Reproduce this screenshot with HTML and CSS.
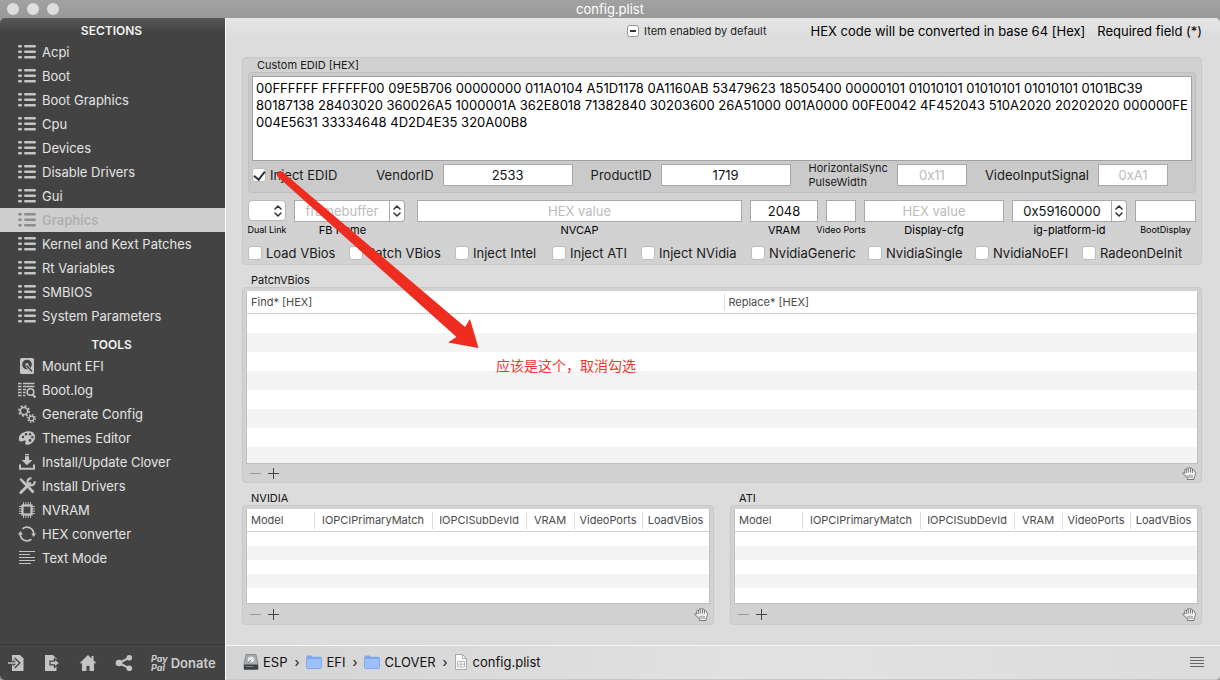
FILE: index.html
```html
<!DOCTYPE html>
<html lang="en">
<head>
<meta charset="utf-8">
<title>config.plist</title>
<link rel="stylesheet" href="styles.css">
</head>
<body>
<svg class="defs" aria-hidden="true">
  <symbol id="i-list" viewBox="0 0 18 14">
    <g fill="currentColor"><rect x="0" y="0" width="4" height="2.4" rx="1.2"/><rect x="0" y="5.5" width="4" height="2.4" rx="1.2"/><rect x="0" y="11" width="4" height="2.4" rx="1.2"/><rect x="6" y="0" width="12" height="2.4" rx="1.2"/><rect x="6" y="5.5" width="12" height="2.4" rx="1.2"/><rect x="6" y="11" width="12" height="2.4" rx="1.2"/></g>
  </symbol>
  <symbol id="i-updown" viewBox="0 0 8 12">
    <path d="M1 4 4 1 7 4M1 8l3 3 3-3" fill="none" stroke="#333" stroke-width="1.5" stroke-linecap="round" stroke-linejoin="round"/>
  </symbol>
  <symbol id="i-hand" viewBox="0 0 14 13">
    <path d="M4 9.200 1.200 7.200C.2 6.300 1 5.200 2 5.600l1 .5L2.600 3.400c-.1-1.200 1.400-1.500 1.800-.4l.3.800V1.900c0-1.200 1.900-1.200 1.900 0v-.5c0-1.200 1.900-1.200 1.900 0v.5c.1-1.100 1.900-1 1.900.2v1.300c.3-1 2-.8 2 .3l.9 1.500c.4.700.2 1.500 0 2.300-.3 1.600-1.400 2.600-1.400 5H5.500c0-1.300-.6-2.500-1.500-3.300z" fill="#f4f4f4" stroke="#666" stroke-width=".9"/>
    <path d="M4.700 3.500v2.500M6.600 2v3.500M8.500 2v3.500M10.400 3v3M6 8v3M8 7.500v3.500M10 8v3" stroke="#666" stroke-width=".8"/>
  </symbol>
  <symbol id="i-folder" viewBox="0 0 16 14">
    <path d="M.5 1.500q0-1 1-1h4l1.200 1.200H14.500q1 0 1 1V5H.5z" fill="#7ba7ee"/>
    <path d="M.5 3.500h15V12.500q0 1-1 1h-13q-1 0-1-1z" fill="#9dc0fa" stroke="#7fa9ec"/>
  </symbol>
</svg>
<header class="titlebar">
  <div class="lights"><i></i><i></i><i></i></div>
  <h1>config.plist</h1>
</header>
<div class="window">
  <aside class="sidebar">
    <nav>
      <h2>SECTIONS</h2>
      <ul>
        <li><a href="#"><svg class="list"><use href="#i-list"/></svg>Acpi</a></li>
        <li><a href="#"><svg class="list"><use href="#i-list"/></svg>Boot</a></li>
        <li><a href="#"><svg class="list"><use href="#i-list"/></svg>Boot Graphics</a></li>
        <li><a href="#"><svg class="list"><use href="#i-list"/></svg>Cpu</a></li>
        <li><a href="#"><svg class="list"><use href="#i-list"/></svg>Devices</a></li>
        <li><a href="#"><svg class="list"><use href="#i-list"/></svg>Disable Drivers</a></li>
        <li><a href="#"><svg class="list"><use href="#i-list"/></svg>Gui</a></li>
        <li><a href="#" class="current" aria-current="page"><svg class="list"><use href="#i-list"/></svg>Graphics</a></li>
        <li><a href="#"><svg class="list"><use href="#i-list"/></svg>Kernel and Kext Patches</a></li>
        <li><a href="#"><svg class="list"><use href="#i-list"/></svg>Rt Variables</a></li>
        <li><a href="#"><svg class="list"><use href="#i-list"/></svg>SMBIOS</a></li>
        <li><a href="#"><svg class="list"><use href="#i-list"/></svg>System Parameters</a></li>
      </ul>
      <h2 class="second">TOOLS</h2>
      <ul>
        <li><a href="#"><svg viewBox="0 0 18 18"><rect x="2" y="1" width="14" height="16" rx="1.500" fill="currentColor"/><circle cx="9" cy="7.500" r="4.800" fill="#434343"/><circle cx="9" cy="7.500" r="1.600" fill="currentColor"/><path d="m8.500 8.500 5 5.500" stroke="currentColor" stroke-width="3"/><path d="m9 9 4.500 5" stroke="#434343" stroke-width="1.500" stroke-linecap="round"/></svg>Mount EFI</a></li>
        <li><a href="#"><svg viewBox="0 0 18 18"><path d="M0 2.500h3.500M5 2.500h11.500M0 5.500h3.500M5 5.500h11.500M0 8.500h3.500M5 8.500h3M0 11.500h3.500M5 11.500h2.500M0 14.500h3.500M5 14.500h2.500" stroke="currentColor" stroke-width="1.500"/><circle cx="12.500" cy="11" r="3.300" fill="none" stroke="currentColor" stroke-width="1.600"/><path d="m14.800 13.500 2.500 3" stroke="currentColor" stroke-width="2"/></svg>Boot.log</a></li>
        <li><a href="#"><svg viewBox="0 0 18 18" fill="none" stroke="currentColor"><circle cx="6" cy="6" r="3.600" stroke-width="1.500"/><circle cx="6" cy="6" r="5" stroke-width="1.800" stroke-dasharray="1.960 1.960"/><circle cx="13.500" cy="13.500" r="2.400" stroke-width="1.300"/><circle cx="13.500" cy="13.500" r="3.700" stroke-width="1.500" stroke-dasharray="1.450 1.450"/></svg>Generate Config</a></li>
        <li><a href="#"><svg viewBox="0 0 18 18"><path d="M10 2.200c4.500-.3 7.300 2.500 7.100 6-.2 4-4 7.600-8.300 7.600-2 0-1.800-1.800-1.200-2.800.7-1.400-.8-2-2-1.300C3.500 13 .8 13.200.8 9.800.8 5.800 5 2.300 10 2.200z" fill="currentColor"/><g fill="#434343"><circle cx="5" cy="8" r="1.200"/><circle cx="8" cy="5.300" r="1.200"/><circle cx="12" cy="5.200" r="1.200"/><circle cx="14.300" cy="8.200" r="1.200"/><circle cx="12" cy="11.500" r="1.400"/></g></svg>Themes Editor</a></li>
        <li><a href="#"><svg viewBox="0 0 18 18"><path d="M7 1h4v1.300H7zM7 3.300h4V7h3.500L9 12.200 3.500 7H7z" fill="currentColor"/><path d="M2 11.500v4.200h14v-4.200" fill="none" stroke="currentColor" stroke-width="2"/></svg>Install/Update Clover</a></li>
        <li><a href="#"><svg viewBox="0 0 18 18"><path d="M1.500 2.500 3 1l4.500 4.200L16.500 14.500l-2 2L9.500 11 5.300 7z" fill="currentColor"/><path d="m2.800 15.500 9.200-9" stroke="currentColor" stroke-width="2.800" stroke-linecap="round"/><path d="M16.600 4.200A3.600 3.600 0 1 1 13.500 1.300" fill="none" stroke="currentColor" stroke-width="2.200"/></svg>Install Drivers</a></li>
        <li><a href="#"><svg viewBox="0 0 18 18" fill="none" stroke="currentColor"><rect x="4.500" y="4.500" width="9" height="9" stroke-width="2.200"/><path d="M5.500 1v3M7.800 1v3M10.200 1v3M12.500 1v3M5.500 14v3M7.800 14v3M10.200 14v3M12.500 14v3M1 5.500h3M1 7.800h3M1 10.200h3M1 12.500h3M14 5.500h3M14 7.800h3M14 10.200h3M14 12.500h3" stroke-width=".9"/></svg>NVRAM</a></li>
        <li><a href="#"><svg viewBox="0 0 18 18"><path d="M4.500 3.800A6.800 6.800 0 0 1 15.700 9M13.500 14.200A6.800 6.800 0 0 1 2.300 9" fill="none" stroke="currentColor" stroke-width="1.700"/><path d="M13.200 8.500H18L15.600 12zM0 9.500h4.800L2.400 6z" fill="currentColor"/></svg>HEX converter</a></li>
        <li><a href="#"><svg viewBox="0 0 18 18"><path d="M1 2.500h16M1 5.500h11M1 8.500h16M1 11.500h16M1 14.500h12" stroke="currentColor" stroke-width="1.200"/></svg>Text Mode</a></li>
      </ul>
    </nav>
    <footer class="actions">
      <button aria-label="Import"><svg viewBox="0 0 18 18"><path d="M5 1h8l3.500 3.500V17H5z" fill="currentColor"/><path d="M1 9h9M7 4.700 11.300 9 7 13.300" fill="none" stroke="#434343" stroke-width="3.500"/><path d="M1 9h9M6.500 4.700 10.800 9l-4.300 4.300" fill="none" stroke="currentColor" stroke-width="1.500"/></svg></button>
      <button aria-label="Export"><svg viewBox="0 0 18 18"><path d="M2 1h8l3.500 3.500V17H2z" fill="currentColor"/><path d="M7 7.200h4.500V4.500L16.500 9l-5 4.500v-2.700H7z" fill="currentColor" stroke="#434343" stroke-width="1.200"/></svg></button>
      <button aria-label="Home"><svg viewBox="0 0 18 18"><path d="M9 1 .5 9.300H3V17h4.500v-5h3v5H15V9.300h2.500L14.500 6.300V2h-2v2.400z" fill="currentColor"/></svg></button>
      <button aria-label="Share"><svg viewBox="0 0 18 18"><path d="M14 3.800 4 9l10 5.200" fill="none" stroke="currentColor" stroke-width="2"/><g fill="currentColor"><circle cx="14.300" cy="3.700" r="2.800"/><circle cx="4" cy="9" r="3.300"/><circle cx="14.300" cy="14.300" r="2.800"/></g></svg></button>
      <button class="donate"><span class="paypal">Pay<br>Pal</span>Donate</button>
    </footer>
  </aside>
  <div class="content">
    <main>
      <div class="hints">
        <label class="small"><input type="checkbox" class="mixed">Item enabled by default</label>
        <span class="hex">HEX code will be converted in base 64 [Hex]</span>
        <span>Required field (*)</span>
      </div>
      <section class="box graphics">
        <label class="caption" for="edid">Custom EDID [HEX]</label>
        <div class="inner">
          <textarea id="edid" spellcheck="false">00FFFFFF FFFFFF00 09E5B706 00000000 011A0104 A51D1178 0A1160AB 53479623 18505400 00000101 01010101 01010101 01010101 0101BC39
80187138 28403020 360026A5 1000001A 362E8018 71382840 30203600 26A51000 001A0000 00FE0042 4F452043 510A2020 20202020 000000FE
004E5631 33334648 4D2D4E35 320A00B8</textarea>
          <div class="edid-row">
            <label class="check"><input type="checkbox" checked>Inject EDID</label>
            <label for="vendor">VendorID</label><input id="vendor" type="text" value="2533">
            <label for="product">ProductID</label><input id="product" type="text" value="1719">
            <label for="sync" class="sync">HorizontalSync<br>PulseWidth</label><input id="sync" type="text" placeholder="0x11">
            <label for="signal">VideoInputSignal</label><input id="signal" type="text" placeholder="0xA1">
          </div>
        </div>
        <div class="fields">
          <div class="field tiny"><span class="combo"><select id="dual" aria-label="Dual Link"><option></option></select><svg><use href="#i-updown"/></svg></span><label for="dual">Dual Link</label></div>
          <div class="field fb"><span class="combo"><input id="fb" type="text" placeholder="framebuffer"><button aria-label="Show framebuffers"><svg><use href="#i-updown"/></svg></button></span><label for="fb">FB Name</label></div>
          <div class="field"><input id="nvcap" type="text" placeholder="HEX value"><label for="nvcap">NVCAP</label></div>
          <div class="field"><input id="vram" type="text" value="2048"><label for="vram">VRAM</label></div>
          <div class="field tiny"><input id="ports" type="text"><label for="ports">Video Ports</label></div>
          <div class="field"><input id="cfg" type="text" placeholder="HEX value"><label for="cfg">Display-cfg</label></div>
          <div class="field"><span class="combo"><input id="ig" type="text" value="0x59160000"><button aria-label="Show platform ids"><svg><use href="#i-updown"/></svg></button></span><label for="ig">ig-platform-id</label></div>
          <div class="field tiny"><input id="bootd" type="text"><label for="bootd">BootDisplay</label></div>
        </div>
        <div class="checks">
          <label class="check"><input type="checkbox">Load VBios</label>
          <label class="check"><input type="checkbox">Patch VBios</label>
          <label class="check"><input type="checkbox">Inject Intel</label>
          <label class="check"><input type="checkbox">Inject ATI</label>
          <label class="check"><input type="checkbox">Inject NVidia</label>
          <label class="check"><input type="checkbox">NvidiaGeneric</label>
          <label class="check"><input type="checkbox">NvidiaSingle</label>
          <label class="check"><input type="checkbox">NvidiaNoEFI</label>
          <label class="check"><input type="checkbox">RadeonDeInit</label>
        </div>
      </section>
      <section class="group">
        <h3>PatchVBios</h3>
        <div class="box tablebox">
          <div class="scroll tall">
            <table>
              <thead><tr><th class="c-find">Find* [HEX]</th><th>Replace* [HEX]</th></tr></thead>
              <tbody><tr><td></td><td></td></tr><tr><td></td><td></td></tr><tr><td></td><td></td></tr><tr><td></td><td></td></tr><tr><td></td><td></td></tr><tr><td></td><td></td></tr><tr><td></td><td></td></tr><tr><td></td><td></td></tr></tbody>
            </table>
          </div>
          <div class="tools"><button class="minus" aria-label="Remove"></button><button class="plus" aria-label="Add"></button><svg class="hand"><use href="#i-hand"/></svg></div>
        </div>
      </section>
      <div class="pair">
        <section class="group">
          <h3>NVIDIA</h3>
          <div class="box tablebox">
            <div class="scroll short">
              <table class="cards">
                <thead><tr><th class="c-model">Model</th><th class="c-match">IOPCIPrimaryMatch</th><th class="c-sub">IOPCISubDevId</th><th class="c-vram">VRAM</th><th class="c-ports">VideoPorts</th><th class="c-load">LoadVBios</th></tr></thead>
                <tbody><tr><td colspan="6"></td></tr><tr><td colspan="6"></td></tr><tr><td colspan="6"></td></tr><tr><td colspan="6"></td></tr><tr><td colspan="6"></td></tr></tbody>
              </table>
            </div>
            <div class="tools"><button class="minus" aria-label="Remove"></button><button class="plus" aria-label="Add"></button><svg class="hand"><use href="#i-hand"/></svg></div>
          </div>
        </section>
        <section class="group">
          <h3>ATI</h3>
          <div class="box tablebox">
            <div class="scroll short">
              <table class="cards">
                <thead><tr><th class="c-model">Model</th><th class="c-match">IOPCIPrimaryMatch</th><th class="c-sub">IOPCISubDevId</th><th class="c-vram">VRAM</th><th class="c-ports">VideoPorts</th><th class="c-load">LoadVBios</th></tr></thead>
                <tbody><tr><td colspan="6"></td></tr><tr><td colspan="6"></td></tr><tr><td colspan="6"></td></tr><tr><td colspan="6"></td></tr><tr><td colspan="6"></td></tr></tbody>
              </table>
            </div>
            <div class="tools"><button class="minus" aria-label="Remove"></button><button class="plus" aria-label="Add"></button><svg class="hand"><use href="#i-hand"/></svg></div>
          </div>
        </section>
      </div>
    </main>
    <footer class="pathbar">
      <a href="#"><svg class="p16" viewBox="0 0 16 16"><path d="M3 .5h10L15 10v5.500H1V10z" fill="#a9adb0" stroke="#777" stroke-width=".7"/><ellipse cx="8" cy="5.500" rx="4" ry="3.500" fill="#e4e6e8" stroke="#888" stroke-width=".6"/><path d="m8 6-3 3" stroke="#777"/><rect x="1" y="10.500" width="14" height="5" rx="1" fill="#3e4246"/><path d="M3 12.500h7" stroke="#888"/></svg>ESP</a>
      <span class="sep">›</span>
      <a href="#"><svg class="p16"><use href="#i-folder"/></svg>EFI</a>
      <span class="sep">›</span>
      <a href="#"><svg class="p16"><use href="#i-folder"/></svg>CLOVER</a>
      <span class="sep">›</span>
      <a href="#"><svg class="doc" viewBox="0 0 12 16"><path d="M.5.500h7l4 4v11H.5z" fill="#fafafa" stroke="#aaa"/><path d="M7.500.500v4h4" fill="none" stroke="#aaa"/><path d="M2.500 7.500h7v5.500h-7zM2.500 10.200h7M6 7.500V13" fill="none" stroke="#bbb"/></svg>config.plist</a>
      <button class="menu" aria-label="Menu"></button>
    </footer>
  </div>
</div>
<svg class="arrow" viewBox="0 0 204 180" aria-hidden="true"><path d="M6 1.500 189 157l5-8 8.500 29L172 172.500l8.500-5.500L1.500 6.500C-.500 3 3-.500 6 1.500z" fill="#ee2c20"/></svg>
<p class="note" lang="zh-CN">应该是这个，取消勾选</p>
</body>
</html>
```
FILE: styles.css
```css
* { box-sizing: border-box; }
body {
  margin: 0;
  min-height: 100vh;
  display: flex;
  flex-direction: column;
  position: relative;
  background: #9d9d9d;
  color: #1a1a1a;
  font: 13px/16px Inter, "Noto Sans CJK SC", sans-serif;
}
h1, h2, h3, p, ul { margin: 0; padding: 0; font-weight: 400; }
ul { list-style: none; }
a { color: inherit; text-decoration: none; }
button { border: 0; padding: 0; background: none; color: inherit; font: inherit; }
svg { display: block; flex: none; }
.defs { position: absolute; width: 0; height: 0; }

.titlebar {
  height: 18px;
  display: grid;
  grid-template-columns: 1fr auto 1fr;
  align-items: center;
  background: linear-gradient(#a2a2a2, #999);
  color: #fff;
}
.titlebar h1 { font-size: 13px; line-height: 18px; }
.lights { display: flex; gap: 8px; padding-left: 7px; }
.lights i { width: 12px; height: 12px; border-radius: 50%; background: #dedede; }

.window { flex: 1; display: grid; grid-template-columns: 225px 1fr; }

.sidebar {
  display: flex;
  flex-direction: column;
  justify-content: space-between;
  background: linear-gradient(#585858, #434343 14px);
  border-radius: 5px 0 0 5px;
  color: #e4e4e4;
}
.sidebar h2 {
  padding: 4px 2px 0 0;
  text-align: center;
  font-size: 12px;
  line-height: 18px;
  font-weight: 600;
  color: #f2f2f2;
}
.sidebar h2.second { padding-top: 8px; }
.sidebar li a {
  display: flex;
  align-items: center;
  gap: 6px;
  height: 24px;
  padding-left: 18px;
}
.sidebar svg { width: 18px; height: 18px; color: #c4c4c4; }
.sidebar svg.list { height: 14px; }
.sidebar .current { background: #cecece; color: #b0b0b0; font-weight: 600; }
.sidebar .current svg { color: #8d8d8d; }
.actions {
  display: flex;
  align-items: center;
  gap: 18px;
  height: 36px;
  padding: 0 7px;
  border-top: 1px solid #393939;
}
.donate { display: flex; align-items: center; gap: 3px; font-weight: 600; color: #cdcdcd; }
.paypal { font-size: 9px; line-height: 9px; font-style: italic; font-weight: 700; text-align: left; }

.content {
  display: flex;
  flex-direction: column;
  justify-content: space-between;
  min-width: 0;
  border-left: 1px solid #fafafa;
  border-radius: 0 5px 5px 0;
  background: linear-gradient(#e6e6e6, #dcdcdc 20px);
}
main { padding: 4px 18px 0 16px; }
.hints {
  display: flex;
  justify-content: flex-end;
  align-items: center;
  height: 18px;
  margin-bottom: 17px;
  gap: 12px;
  color: #000;
}
.hints .small { display: flex; align-items: center; gap: 5px; font-size: 11px; margin-right: 32px; color: #222; }

.box { border: 1px solid #c8c8c8; border-radius: 4px; background: #d2d2d2; }
.graphics { padding: 0 5px 3px; }
.caption { display: block; padding-left: 9px; font-size: 11px; line-height: 14px; }
.inner { padding: 3px; background: #cacaca; border: 1px solid #c0c0c0; border-radius: 4px; }
textarea {
  display: block;
  width: 100%;
  height: 85px;
  padding: 3px;
  border: 1px solid #a2a2a2;
  border-radius: 0;
  resize: none;
  overflow: hidden;
  white-space: pre;
  background: #fff;
  color: #000;
  font: 13px/17px Inter, sans-serif;
}
input[type="text"] {
  width: 100%;
  min-width: 0;
  height: 22px;
  padding: 0 2px;
  border: 1px solid #a8a8a8;
  border-radius: 0;
  background: #fff;
  color: #111;
  text-align: center;
  font: 13px/16px Inter, sans-serif;
}
input::placeholder { color: #bcbcbc; }
input[type="checkbox"] {
  appearance: none;
  display: grid;
  place-items: center;
  flex: none;
  width: 14px;
  height: 14px;
  margin: 0;
  border: 1px solid #bdbdbd;
  border-radius: 3px;
  background: #fff;
}
input[type="checkbox"]:checked::after {
  content: "";
  width: 5px;
  height: 9px;
  margin-bottom: 3px;
  border: solid #333;
  border-width: 0 2px 2px 0;
  transform: rotate(38deg);
}
input.mixed { width: 12px; height: 12px; border-color: #999; }
input.mixed::after { content: ""; width: 6px; height: 2px; background: #333; }
.check { display: flex; align-items: center; gap: 4px; white-space: nowrap; }
.edid-row {
  display: grid;
  grid-template-columns: 1fr auto 130px auto 130px auto 70px auto 70px;
  column-gap: 9px;
  align-items: center;
  padding-right: 24px;
}
.edid-row label + input + label { margin-left: 9px; }
.edid-row .sync { font-size: 11px; line-height: 14px; }

.fields {
  display: grid;
  grid-template-columns: 38px 115px 1fr 68px 30px 140px 115px 61px;
  column-gap: 8px;
  padding-top: 7px;
}
.field { display: flex; flex-direction: column; align-items: center; gap: 1px; }
.field > label { font-size: 11px; line-height: 14px; white-space: nowrap; color: #000; }
.field.tiny > label { font-size: 9px; }
.fb { padding-right: 4px; }
.fb > label { margin-right: 14px; }
.combo { position: relative; display: flex; width: 100%; }
.combo svg { width: 8px; height: 12px; }
.combo select {
  appearance: none;
  width: 100%;
  height: 21px;
  margin-bottom: 1px;
  border: 1px solid #b8b8b8;
  border-radius: 4px;
  background: #fff;
}
.combo select + svg { position: absolute; right: 4px; top: 5px; pointer-events: none; }
.combo button {
  display: grid;
  place-items: center;
  flex: none;
  width: 15px;
  height: 22px;
  border: 1px solid #a8a8a8;
  border-left: 0;
  border-radius: 0 4px 4px 0;
  background: #fff;
}
.checks {
  display: grid;
  grid-template-columns: 101fr 106fr 97fr 89fr 110fr 117fr 107fr 107fr 114fr;
  padding-top: 8px;
}

.group h3 { padding: 8px 0 0 9px; font-size: 11px; line-height: 14px; color: #111; }
.tablebox { padding: 3px 3px 0; }
.scroll { border: 1px solid #c0c0c0; border-top: 0; background: #fff; overflow: hidden; }
.tall { height: 173px; }
.short { height: 95px; }
table { width: 100%; table-layout: fixed; border-collapse: separate; border-spacing: 0; }
th {
  height: 23px;
  padding: 0 4px;
  border-bottom: 1px solid #cfcfcf;
  background: linear-gradient(#ddd, #ddd) left center / 1px 17px no-repeat;
  text-align: left;
  white-space: nowrap;
  font-size: 11px;
  line-height: 14px;
  font-weight: 400;
  color: #4a4a4a;
}
th:first-child { background: none; }
td { padding: 0; height: 19px; }
tbody tr:nth-child(even) { background: #f4f4f4; }
.cards th { text-align: center; }
.cards th.c-model { text-align: left; }
.cards td { height: 14px; }
.c-find { width: 50.25%; }
.c-model { width: 67px; }
.c-match { width: 118px; }
.c-sub { width: 94px; }
.c-vram { width: 48px; }
.c-ports { width: 68px; }
.tools { display: flex; align-items: center; gap: 7px; height: 18px; padding: 0 2px 0 4px; }
.pair .tools { height: 20px; }
.tools button { width: 11px; height: 11px; }
.minus { background: linear-gradient(#999, #999) center / 11px 1px no-repeat; }
.plus { background: linear-gradient(#444, #444) center / 11px 1px no-repeat, linear-gradient(#444, #444) center / 1px 11px no-repeat; }
.hand { width: 14px; height: 13px; margin-left: auto; }
.pair { display: grid; grid-template-columns: 1fr 1fr; gap: 16px; }

.pathbar {
  display: flex;
  align-items: center;
  gap: 7px;
  height: 35px;
  padding: 0 16px 2px 17px;
  border-top: 1px solid #f4f4f4;
  border-bottom: 1px solid #c8c8c8;
  border-radius: 0 0 5px 0;
  background: linear-gradient(90deg, #d4d4d4, #e2e2e2 55%, #dcdcdc);
  color: #111;
}
.pathbar a { display: flex; align-items: center; gap: 4px; }
.p16 { width: 16px; height: 16px; }
.doc { width: 12px; height: 16px; margin-right: 2px; }
.menu {
  width: 14px;
  height: 10px;
  margin-left: auto;
  background: repeating-linear-gradient(#666 0 1px, transparent 1px 3px);
}

.arrow { position: absolute; left: 276px; top: 170px; width: 204px; height: 180px; pointer-events: none; }
.note { position: absolute; left: 496px; top: 355px; font: 14px/20px "Noto Sans CJK SC", sans-serif; color: #f0352b; }
```
